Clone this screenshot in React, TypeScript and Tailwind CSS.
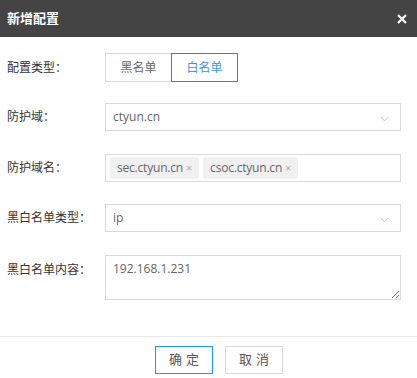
import React from "react";

const font = { fontFamily: '"Open Sans", "Noto Sans CJK SC", sans-serif' };

function Chevron() {
  return (
    <svg width="9" height="6" viewBox="0 0 9 6" className="absolute right-[11px] top-[12px]">
      <path d="M0.5 0.8 L4.5 4.8 L8.5 0.8" fill="none" stroke="#bfbfbf" strokeWidth="1" />
    </svg>
  );
}

function Row({ label, children, top = false, className = "" }: { label: string; children: React.ReactNode; top?: boolean; className?: string }) {
  return (
    <div className={`flex ${top ? "items-start" : "items-center"} ${className}`}>
      <div className={`w-[105px] shrink-0 pl-[7px] text-[12px] text-[#333] ${top ? "pt-[6px]" : ""}`}>{label}</div>
      <div className="flex-1 pr-[16px]">{children}</div>
    </div>
  );
}

function Tag({ text }: { text: string }) {
  return (
    <span className="flex h-[22px] items-center gap-[3px] rounded-[3px] bg-[#f0f0f0] px-[7px] text-[12px] tracking-[-0.2px] text-[#666]">
      {text}
      <span className="text-[11px] text-[#aaa]">×</span>
    </span>
  );
}

export default function App() {
  return (
    <div className="h-[378px] w-[417px] overflow-hidden bg-white" style={font}>
      <div className="flex h-[37px] items-center justify-between bg-[#444444] pl-[7px] pr-[10px]">
        <span className="text-[13px] font-bold text-white">新增配置</span>
        <svg width="10" height="10" viewBox="0 0 10 10">
          <path d="M1 1 L9 9 M9 1 L1 9" stroke="white" strokeWidth="2.2" />
        </svg>
      </div>
      <div className="pt-[16px]">
        <Row label="配置类型：">
          <div className="flex h-[29px]">
            <div className="flex w-[67px] items-center justify-center border border-[#d9d9d9] text-[12px] text-[#666]">黑名单</div>
            <div className="-ml-px flex w-[67px] items-center justify-center border border-[#2a88d8] text-[12px] text-[#3a97e8]">白名单</div>
          </div>
        </Row>
        <Row label="防护域：" className="mt-[21px]">
          <div className="relative flex h-[28px] items-center border border-[#d9d9d9] pl-[7px] text-[12px] text-[#666]">
            ctyun.cn
            <Chevron />
          </div>
        </Row>
        <Row label="防护域名：" className="mt-[23px]">
          <div className="flex h-[28px] items-center gap-[4px] border border-[#d9d9d9] pl-[4px]">
            <Tag text="sec.ctyun.cn" />
            <Tag text="csoc.ctyun.cn" />
          </div>
        </Row>
        <Row label="黑白名单类型：" className="mt-[22px]">
          <div className="relative flex h-[28px] items-center border border-[#d9d9d9] pl-[7px] text-[12px] text-[#666]">
            ip
            <Chevron />
          </div>
        </Row>
        <Row label="黑白名单内容：" top className="mt-[23px]">
          <textarea
            readOnly
            defaultValue="192.168.1.231"
            className="block h-[45px] w-full border border-[#d9d9d9] px-[7px] pt-[4px] text-[12px] text-[#666] outline-none"
            style={font}
          />
        </Row>
      </div>
      <div className="mt-[36px] border-t border-[#e8e8e8] pt-[9px]">
        <div className="flex justify-center gap-[12px] pl-[21px]">
          <div className="flex h-[28px] w-[58px] items-center justify-center border border-[#1e90ff] text-[13px] text-[#555] tracking-[4px] pl-[4px]">确定</div>
          <div className="flex h-[28px] w-[58px] items-center justify-center border border-[#d9d9d9] text-[13px] text-[#555] tracking-[4px] pl-[4px]">取消</div>
        </div>
      </div>
    </div>
  );
}
